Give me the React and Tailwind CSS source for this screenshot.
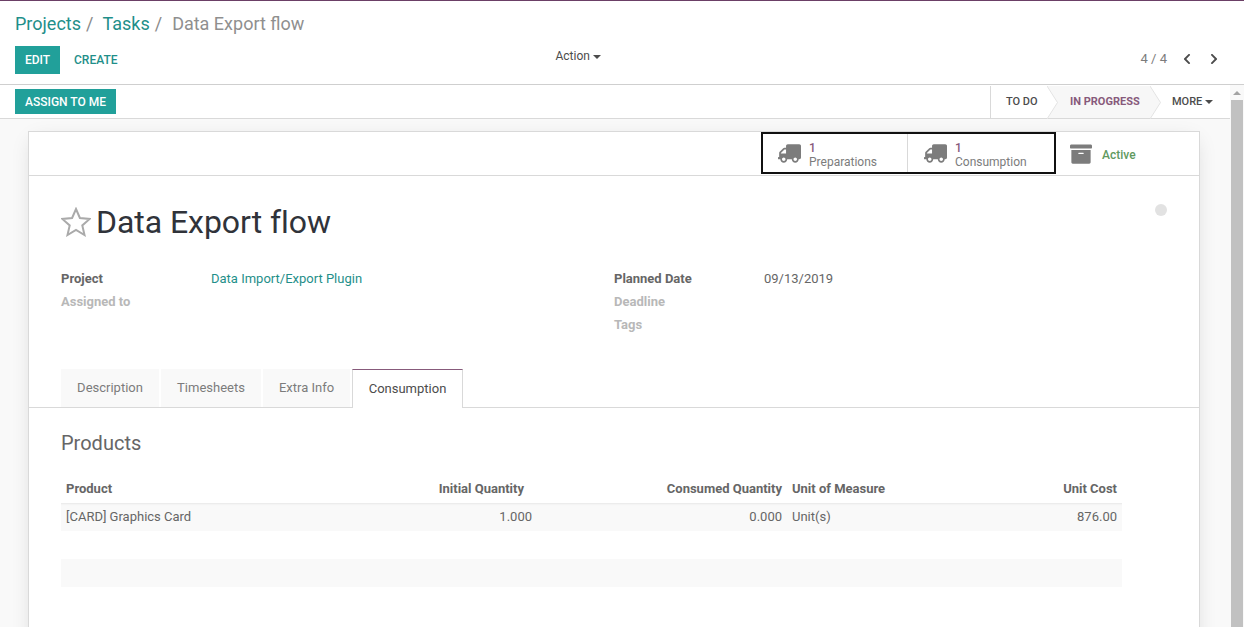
import React from "react";
import { FaTruck, FaArchive, FaChevronLeft, FaChevronRight } from "react-icons/fa";

const Caret = ({ c = "border-t-[#4c4c4c]", ml = "ml-1" }) => (
  <span className={`inline-block w-0 h-0 ${ml} align-middle border-x-[4px] border-x-transparent border-t-[4px] ${c}`} />
);

const Chevron = ({ fill }) => (
  <svg className="absolute top-0 right-[-11px] z-10" width="11" height="33" viewBox="0 0 11 33">
    <path d="M0 0 L10.5 16.5 L0 33" fill={fill} stroke="#e3e3e3" strokeWidth="1" />
  </svg>
);

const StatButton = ({ n, label, w, pl }) => (
  <div className={`flex items-center h-full ${pl} ${w}`}>
    <FaTruck className="text-[#7c7c7c] text-[23px] -scale-x-100 mr-2 w-[23px]" />
    <div className="pt-[3px] leading-[14px] text-[12px] text-[#7c7c7c]">
      <div className="text-[#875a7b] font-medium h-[14px]">{n}</div>
      <div>{label}</div>
    </div>
  </div>
);

const Field = ({ label, muted, value }) => (
  <div className="flex h-[23px] items-center text-[13px]">
    <div className={`font-bold w-[150px] ${muted ? "text-[#b8b8b8]" : "text-[#666666]"}`}>{label}</div>
    {value}
  </div>
);

const Tab = ({ children, w }) => (
  <div className={`${w} mr-[2px] h-[38px] bg-[#f9f9f9] text-[13px] text-[#7c7c7c] flex items-center justify-center`}>{children}</div>
);

export default function App() {
  return (
    <div
      className="w-[1244px] h-[627px] overflow-hidden bg-white flex flex-col text-[#666666]"
      style={{ fontFamily: "Roboto, sans-serif" }}
    >
      <div className="h-[1px] bg-[#6b3f66] shrink-0" />
      <div className="h-[84px] shrink-0 border-b border-[#cfcfcf] px-[15px] relative">
        <div className="h-[45px] flex items-center text-[18px]">
          <span className="text-[#1f8f8a]">Projects</span>
          <span className="text-[#8a8a8a] ml-[5px] mr-[9px]">/</span>
          <span className="text-[#1f8f8a]">Tasks</span>
          <span className="text-[#8a8a8a] ml-[5px] mr-[10px]">/</span>
          <span className="text-[#8f8f8f]">Data Export flow</span>
        </div>
        <div className="flex items-center h-[28px]">
          <div className="w-[45px] h-[28px] bg-[#21a09a] text-white text-[12px] font-medium flex items-center justify-center">EDIT</div>
          <div className="ml-[14px] text-[#1f8f8a] text-[12px] font-medium">CREATE</div>
          <div className="ml-[438px] text-[12px] text-[#4c4c4c] pb-[8px]">Action<Caret ml="ml-[3px]" /></div>
          <div className="ml-auto flex items-center text-[13px] text-[#7c7c7c] pr-[9px] pb-[2px]">
            <span>4 / 4</span>
            <FaChevronLeft className="ml-[14px] text-[12px] text-[#4c4c4c]" />
            <FaChevronRight className="ml-[15px] text-[12px] text-[#4c4c4c]" />
          </div>
        </div>
      </div>
      <div className="flex flex-1 min-h-0">
        <div className="flex-1 min-w-0 flex flex-col bg-[#f9f9f9]">
          <div className="h-[34px] shrink-0 bg-white border-b border-[#d9d9d9] pl-[15px] flex items-center justify-between">
            <div className="w-[101px] h-[25px] mb-[1px] pt-[1px] bg-[#21a09a] text-white text-[12px] font-medium flex items-center justify-center">ASSIGN TO ME</div>
            <div className="flex h-full text-[11px] font-medium text-[#4c4c4c] pt-[1px]">
              <div className="w-[57px] border-l border-[#d9d9d9] flex items-center pl-[15px] relative">TO DO<Chevron fill="#ffffff" /></div>
              <div className="w-[103px] bg-[#f7f7f7] text-[#875a7b] flex items-center pl-[23px] relative font-bold">IN PROGRESS<Chevron fill="#f7f7f7" /></div>
              <div className="w-[80px] flex items-center pl-[22px] relative">MORE<Caret ml="ml-[3px]" /></div>
            </div>
          </div>
          <div className="flex-1 min-h-0 pt-[12px] pl-[28px] pr-[30px]">
            <div className="bg-white border border-[#d9d9d9] h-[520px] shadow-[0_5px_20px_-5px_rgba(0,0,0,0.15)]">
              <div className="h-[44px] border-b border-[#d9d9d9] flex justify-end">
                <div className="flex h-[42px] outline-2 outline-[#111111] -outline-offset-2">
                  <div className="border-r border-[#d9d9d9] h-full"><StatButton n="1" label="Preparations" w="w-[146px]" pl="pl-[17px]" /></div>
                  <StatButton n="1" label="Consumption" w="w-[148px]" pl="pl-[16px]" />
                </div>
                <div className="w-[143px] flex items-center pl-[14px]">
                  <FaArchive className="text-[#7c7c7c] text-[22px] w-[22px]" />
                  <span className="ml-[10px] pt-[2px] text-[#5f9a5f] text-[12px] font-medium">Active</span>
                </div>
              </div>
              <div className="relative pt-[26px] pl-[32px] pr-[77px]">
                <div className="flex items-center h-[40px]">
                  <svg width="30" height="30" viewBox="0 0 30 30" className="mr-[5px] shrink-0">
                    <path
                      d="M15 2 L18.9 11 L28.7 11.9 L21.3 18.4 L23.5 28 L15 23 L6.5 28 L8.7 18.4 L1.3 11.9 L11.1 11 Z"
                      fill="none"
                      stroke="#aaaaaa"
                      strokeWidth="2"
                      strokeLinejoin="miter"
                    />
                  </svg>
                  <span className="text-[32px] text-[#30333a] tracking-[-0.05px]">Data Export flow</span>
                </div>
                <div className="absolute right-[32px] top-[28px] w-[12px] h-[12px] rounded-full bg-[#e2e2e2]" />
                <div className="flex mt-[25px]">
                  <div className="w-[553px]">
                    <Field label="Project" value={<span className="text-[#1f8f8a]">Data Import/Export Plugin</span>} />
                    <Field label="Assigned to" muted />
                  </div>
                  <div>
                    <Field label="Planned Date" value={<span className="text-[#666666]">09/13/2019</span>} />
                    <Field label="Deadline" muted />
                    <Field label="Tags" muted />
                  </div>
                </div>
              </div>
              <div className="mt-[33px] h-[39px] border-b border-[#d9d9d9] flex pl-[32px] items-start">
                <Tab w="w-[98px]">Description</Tab>
                <Tab w="w-[100px]">Timesheets</Tab>
                <Tab w="w-[87px]">Extra Info</Tab>
                <div className="w-[111px] h-[39px] bg-white border-x border-t border-[#d9d9d9] border-t-[#875a7b] text-[13px] text-[#4c4c4c] flex items-center justify-center">Consumption</div>
              </div>
              <div className="pl-[32px] pr-[77px]">
                <div className="text-[20px] text-[#666666] mt-[21px] h-[28px] leading-[28px]">Products</div>
                <table className="table-fixed w-[1061px] mt-[17px] text-[13px] border-collapse">
                  <colgroup>
                    <col className="w-[300px]" />
                    <col className="w-[171px]" />
                    <col className="w-[255px]" />
                    <col className="w-[135px]" />
                    <col className="w-[200px]" />
                  </colgroup>
                  <thead>
                    <tr className="h-[29px] text-[#666666]">
                      <th className="text-left pl-[5px] font-bold">Product</th>
                      <th className="text-right pr-[8px] font-bold">Initial Quantity</th>
                      <th className="text-right pr-[5px] font-bold">Consumed Quantity</th>
                      <th className="text-left pl-[5px] font-bold">Unit of Measure</th>
                      <th className="text-right pr-[5px] font-bold">Unit Cost</th>
                    </tr>
                  </thead>
                  <tbody>
                    <tr className="h-[28px] bg-[#f9f9f9] shadow-[inset_0_3px_3px_-3px_rgba(0,0,0,0.15)]">
                      <td className="pl-[5px]">[CARD] Graphics Card</td>
                      <td className="text-right">1.000</td>
                      <td className="text-right pr-[5px]">0.000</td>
                      <td className="pl-[5px]">Unit(s)</td>
                      <td className="text-right pr-[5px]">876.00</td>
                    </tr>
                    <tr className="h-[28px]"><td colSpan={5} /></tr>
                    <tr className="h-[28px] bg-[#f9f9f9]"><td colSpan={5} /></tr>
                  </tbody>
                </table>
              </div>
            </div>
          </div>
        </div>
        <div className="w-[14px] shrink-0 bg-[#f9f9f9] flex flex-col items-center">
          <div className="h-[15px] flex items-center justify-center">
            <span className="w-0 h-0 border-x-[4px] border-x-transparent border-b-[4px] border-b-[#a3a3a3]" />
          </div>
          <div className="flex-1 w-[12px] bg-[#c1c1c1]" />
        </div>
      </div>
    </div>
  );
}
